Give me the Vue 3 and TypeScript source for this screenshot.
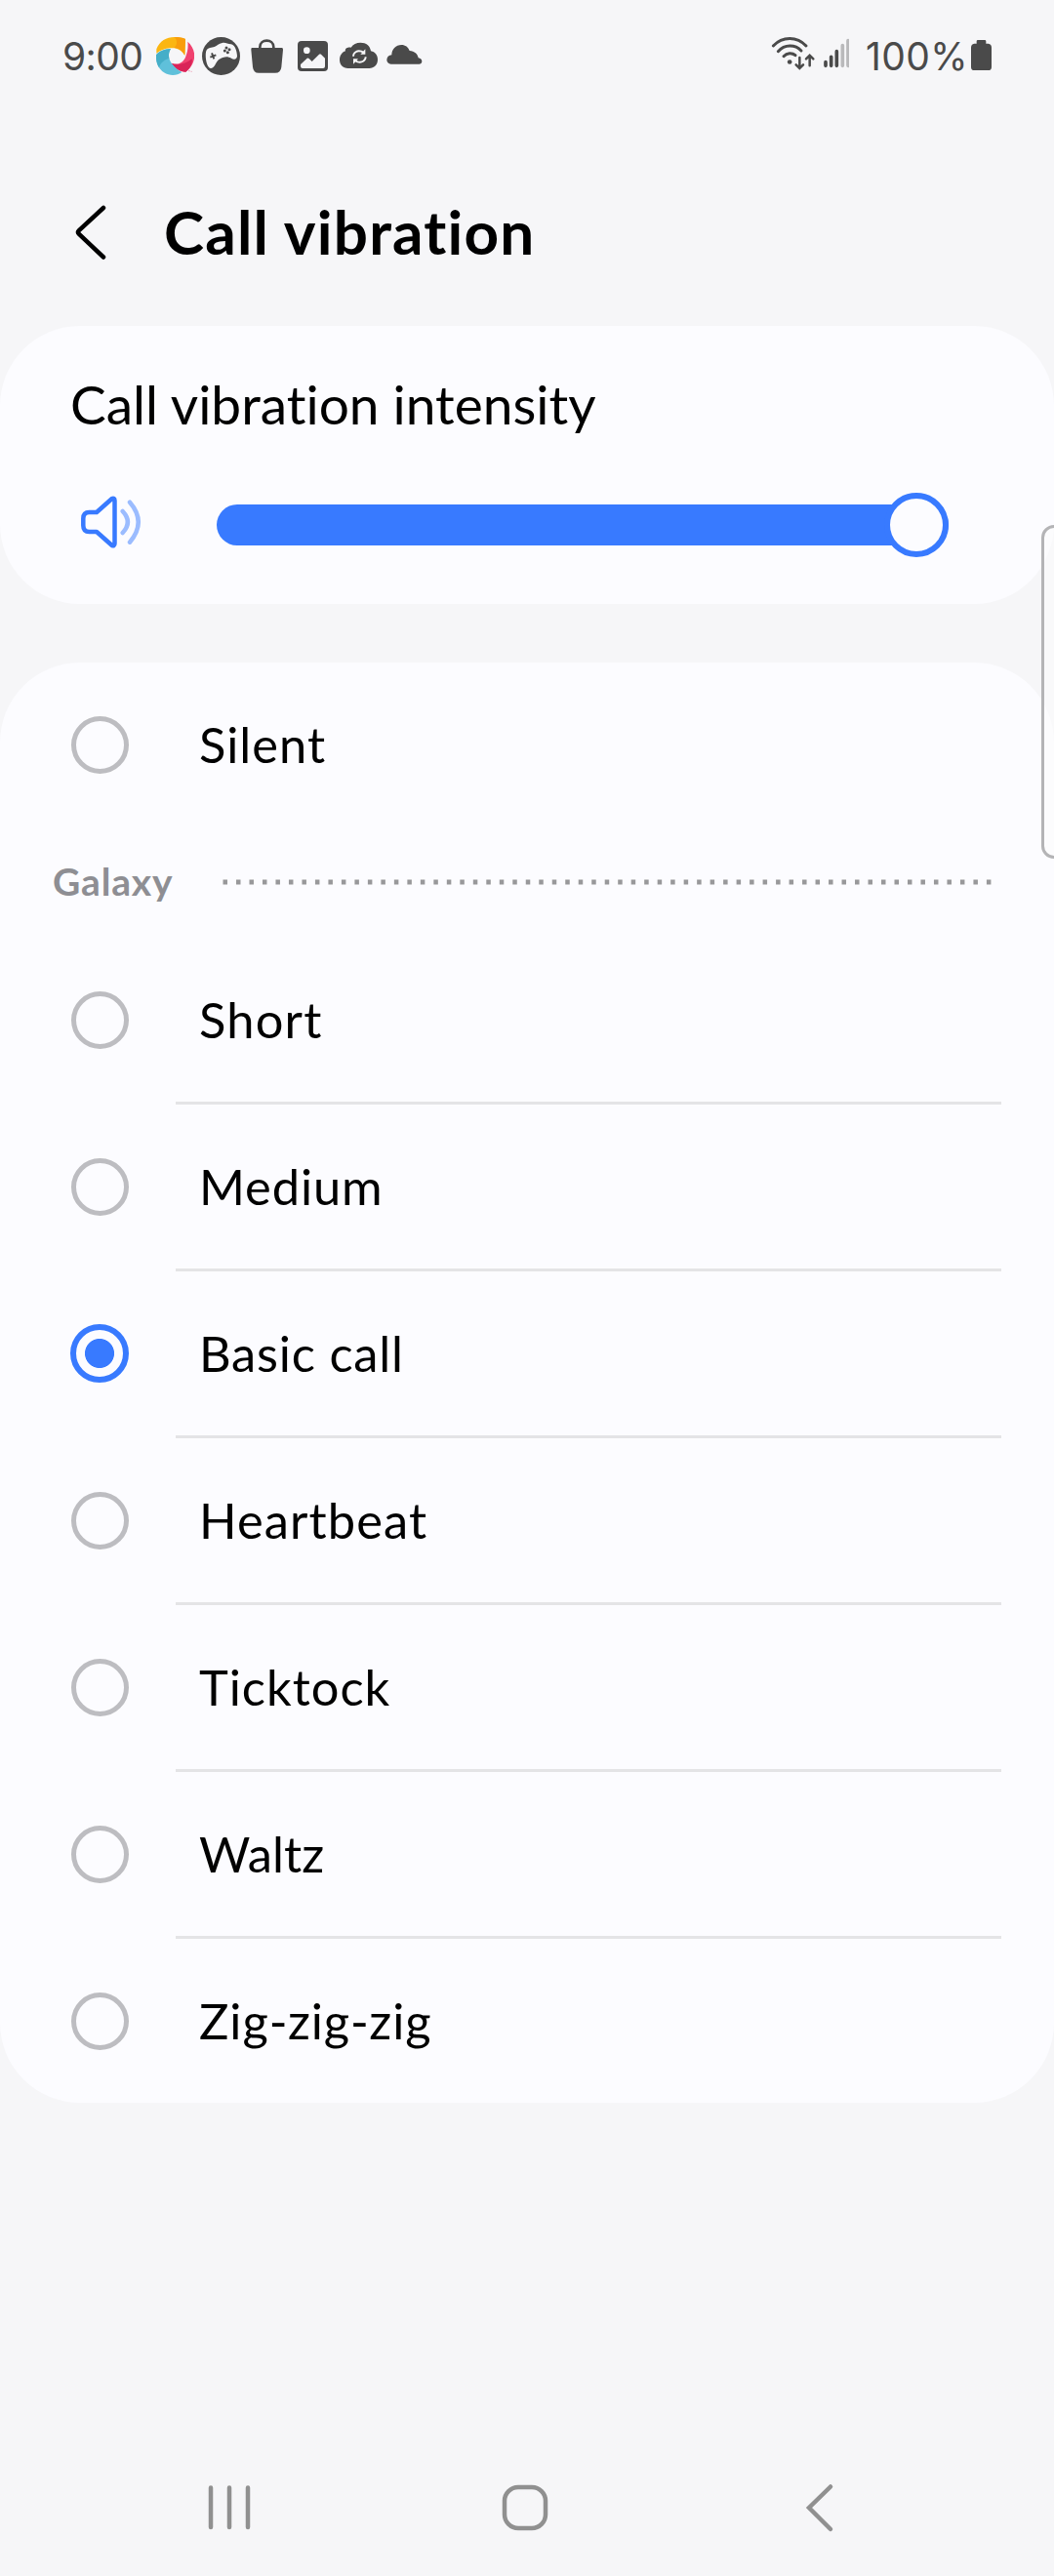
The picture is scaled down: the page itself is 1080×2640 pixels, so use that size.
<script setup lang="ts">
import { ref } from 'vue'

interface Pattern {
  name: string
  tracking: number
}

const silent: Pattern = { name: 'Silent', tracking: 1 }
const patterns: Pattern[] = [
  { name: 'Short', tracking: 1.2 },
  { name: 'Medium', tracking: 0.9 },
  { name: 'Basic call', tracking: 0.8 },
  { name: 'Heartbeat', tracking: 1.1 },
  { name: 'Ticktock', tracking: 1 },
  { name: 'Waltz', tracking: 0.1 },
  { name: 'Zig-zig-zig', tracking: 0.95 },
]
const selected = ref('Basic call')
const intensity = ref(100)
</script>

<template>
  <div class="screen">
    <header class="status">
      <span class="clock">9:00</span>
      <div class="notifications">
        <svg viewBox="330 54 117 117">
          <path fill="#fbb612" d="M331 91C340 66 362 54 386 54C400 54 411 56 420 60L418 110C407 92 392 86 373 88C356 89 342 95 331 104Z" />
          <path fill="#f99d0c" d="M386 54C400 54 411 56 420 60L418 110C407 92 395 87 384 87C396 80 396 64 386 54Z" />
          <path fill="#f0426f" d="M427 68C442 81 450 101 447 119C444 137 434 151 421 161C404 160 386 151 377 134C397 141 413 133 420 116C427 100 429 84 427 68Z" />
          <path fill="#d92458" d="M377 134C397 143 420 137 440 121C443 136 434 151 421 161C404 160 386 151 377 134Z" />
          <path fill="#5fc0da" d="M330 109C341 96 356 91 375 90C365 106 368 125 381 139C387 147 396 156 409 162C394 173 372 174 354 163C337 152 329 132 330 109Z" />
          <path fill="#45aec8" d="M330 109C341 96 356 91 375 90C368 101 368 112 370 120C358 121 343 133 339 148C332 137 329 124 330 109Z" />
          <path stroke="#e8638a" stroke-width="2" fill="none" d="M429 158h5M437 160h3" />
        </svg>
        <svg viewBox="471 54 117 117">
          <circle cx="529.500" cy="112.500" r="58.500" fill="#4a4a4a" />
          <path fill="#f6f6f8" d="M484 96C488 86 502 87 509 84C518 80 522 75 533 72C542 69 550 76 560 76C573 78 578 98 579 112C579 123 569 125 561 119C552 114 545 113 535 117C523 121 518 127 512 138C506 150 497 153 492 147C483 137 480 108 484 96Z" />
          <path stroke="#4a4a4a" stroke-width="6" d="M496 116l18-7M501 103l7 18" />
          <g fill="#4a4a4a"><circle cx="546" cy="87" r="4.500" /><circle cx="555" cy="92" r="4.500" /><circle cx="541" cy="96" r="4.500" /><circle cx="550" cy="101" r="4.500" /></g>
        </svg>
        <svg viewBox="42 54 117 117">
          <path fill="#4a4a4a" d="M55 87H146Q151 87 150 93L145 146Q143 164 126 164H75Q59 164 57 146L52 93Q51 87 55 87Z" />
          <path fill="none" stroke="#4a4a4a" stroke-width="8" d="M79 90V85C79 58 121 58 121 85V90" />
        </svg>
        <svg viewBox="183 54 117 117">
          <rect x="195" y="66" width="93" height="93" rx="12" fill="#4a4a4a" />
          <circle cx="223" cy="95" r="10" fill="#f6f6f8" />
          <path fill="#f6f6f8" d="M204 138L224 119Q227 117 230 120L239 129L261 107Q264 104 267 107L279 119V144Q279 150 273 150H210Q204 150 204 144Z" />
        </svg>
        <svg viewBox="324 54 117 117">
          <path fill="#4a4a4a" d="M350 150C334 150 324 139 324 124C324 111 331 101 342 97C339 89 349 85 359 86C365 76 376 71 388 71C406 71 418 80 420 97C433 99 441 110 441 123C441 139 430 150 415 150Z" />
          <path fill="none" stroke="#f6f6f8" stroke-width="5.500" d="M366 113C366 101 378 94 391 98L397 101M404 115C404 127 392 134 379 130L373 127" />
          <path fill="#f6f6f8" d="M403 91V107H388ZM366 137V121H381Z" />
        </svg>
        <svg viewBox="465 54 117 117">
          <path fill="#4a4a4a" d="M482 137C474 137 469 131 469 124C469 116 475 110 484 109C484 91 497 78 514 78C526 78 535 85 539 96C554 97 564 106 566 118C573 119 577 123 577 129C577 134 573 137 568 137Z" />
        </svg>
      </div>
      <div class="system">
        <svg class="wifi" viewBox="30 54 240 108">
          <g fill="none" stroke="#4a4a4a" stroke-width="9" stroke-linecap="round">
            <path d="M37 87C65 57 110 57 138 87M52 104C72 82 104 82 123 102M69 119C79 108 95 107 105 116" />
            <path stroke-width="7.500" d="M118 123V154M107 145L118 156L129 145M149 148V118M138 127L149 116L160 127" />
          </g>
          <circle cx="87.500" cy="136.500" r="7" fill="#4a4a4a" />
          <g stroke-width="11" stroke-linecap="round">
            <path stroke="#4a4a4a" d="M198 137V148M215 121V148M232 104V148" />
            <path stroke="#b9b9bb" d="M250 86V148M267 71V148" />
          </g>
        </svg>
        <span class="percent">100%</span>
        <svg class="battery" viewBox="645 60 63 99">
          <path fill="#4a4a4a" d="M666 63H687Q691 63 691 67V74H698Q708 76 708 86V146Q708 156 698 156H655Q645 156 645 146V86Q645 76 655 74H662V67Q662 63 666 63Z" />
        </svg>
      </div>
    </header>

    <div class="titlebar">
      <svg class="back" viewBox="0 0 34 60" fill="none" stroke="#000" stroke-width="4.500" stroke-linecap="round">
        <path d="M30 5L5 28Q3 30 5 32L30 55.500" />
      </svg>
      <h1>Call vibration</h1>
    </div>

    <section class="card intensity">
      <h2>Call vibration intensity</h2>
      <div class="slider-row">
        <svg class="speaker" viewBox="0 0 64 54" fill="none" stroke="#387aff" stroke-width="4.500" stroke-linecap="round" stroke-linejoin="round">
          <path d="M18 17L33.500 3.200Q36.500 2 36.500 5V49Q36.500 52 33.500 50.800L18 37H10.500Q4.300 37 4.300 30.500V23.500Q4.300 17 10.500 17Z" />
          <path stroke="#9bbcff" d="M44.700 16Q55 27 44.700 38M52 6.700Q69.500 27 52 47.700" />
        </svg>
        <div class="slider">
          <div class="fill" :style="{ width: intensity + '%' }"><i class="thumb" /></div>
        </div>
      </div>
    </section>

    <section class="card list">
      <div class="row silent">
        <span class="radio" />
        <div class="label"><span :style="{ letterSpacing: silent.tracking + 'px' }">{{ silent.name }}</span></div>
      </div>
      <div class="group">
        <span class="group-name">Galaxy</span>
        <svg class="dots" viewBox="0 0 788 6"><path d="M0.500 3H788" stroke="#98989a" stroke-width="5" stroke-dasharray="4.500 8.990" /></svg>
      </div>
      <div v-for="p in patterns" :key="p.name" class="row" @click="selected = p.name">
        <span class="radio" :class="{ on: selected === p.name }" />
        <div class="label"><span :style="{ letterSpacing: p.tracking + 'px' }">{{ p.name }}</span></div>
      </div>
    </section>

    <nav class="navbar">
      <svg viewBox="0 0 60 60"><path d="M11 9.500V50M30 9.500V50M49 9.500V50" /></svg>
      <svg viewBox="0 0 60 60"><rect x="9" y="9" width="42" height="42" rx="14" /></svg>
      <svg viewBox="0 0 60 60"><path d="M41 8.500L19 30L41 52" /></svg>
    </nav>

    <div class="edge-handle" />
  </div>
</template>

<style>
body {
  background: #f6f6f8;
}
</style>

<style scoped>
.screen {
  position: relative;
  display: flex;
  flex-direction: column;
  width: 1080px;
  height: 2640px;
  overflow: hidden;
  background: #f6f6f8;
  color: #000;
  font-family: Lato, "Noto Sans", sans-serif;
  font-variant-ligatures: none;
}

svg {
  display: block;
  flex: none;
}

.status {
  display: flex;
  align-items: center;
  height: 115px;
  padding: 0 64px;
  box-sizing: border-box;
  color: #4a4a4a;
  font-family: Inter, sans-serif;
  font-size: 39px;
  line-height: 46px;
}

.clock {
  width: 96px;
  letter-spacing: -0.6px;
}

.notifications {
  display: flex;
  gap: 8px;
}

.notifications svg {
  width: 39px;
  height: 39px;
}

.system {
  display: flex;
  align-items: center;
  margin-left: auto;
}

.wifi {
  width: 80px;
  height: 36px;
  margin-top: -7px;
}

.percent {
  width: 105px;
  padding-left: 17px;
  white-space: nowrap;
  letter-spacing: 0.4px;
  margin-right: 1px;
}

.battery {
  width: 21px;
  height: 33px;
  margin-left: 2px;
  margin-top: -2px;
}

.titlebar {
  display: flex;
  align-items: center;
  height: 219px;
  padding-left: 76px;
}

.back {
  width: 34px;
  height: 60px;
  margin-top: 27px;
}

h1 {
  margin: 25px 0 0 58px;
  font-size: 62px;
  font-weight: 700;
  line-height: 80px;
  letter-spacing: 1.2px;
}

.card {
  box-sizing: border-box;
  background: #fcfcff;
  border-radius: 82px;
}

.intensity {
  height: 285px;
  padding-top: 40px;
}

h2 {
  margin: 0 0 0 72px;
  font-size: 55px;
  font-weight: 400;
  line-height: 80px;
}

.slider-row {
  display: flex;
  align-items: center;
  height: 66px;
  margin-top: 51px;
  padding-left: 81px;
}

.speaker {
  width: 64px;
  height: 54px;
  margin-top: -6px;
}

.slider {
  width: 750px;
  height: 42px;
  margin-left: 77px;
}

.fill {
  display: flex;
  align-items: center;
  justify-content: flex-end;
  height: 42px;
  border-radius: 21px;
  background: #387aff;
}

.thumb {
  flex: none;
  width: 66px;
  height: 66px;
  box-sizing: border-box;
  border: 6px solid #387aff;
  border-radius: 50%;
  background: #fcfcff;
}

.list {
  margin-top: 60px;
  height: 1476px;
}

.row {
  display: flex;
  align-items: center;
  height: 171px;
  padding-left: 72px;
}

.row.silent,
.row:last-child {
  height: 168px;
}

.radio {
  flex: none;
  width: 59px;
  height: 59px;
  margin: 0 48.500px 0 0.500px;
  box-sizing: border-box;
  border: 5px solid #bdbdc1;
  border-radius: 50%;
  position: relative;
  top: -1.500px;
}

.row.silent .radio,
.row:last-child .radio {
  top: 0;
}

.radio.on {
  width: 60px;
  height: 60px;
  margin: 0 48px 0 0;
  border: 6px solid #387aff;
  background: radial-gradient(circle, #387aff 14.600px, #fcfcff 15.400px);
}

.label {
  width: 846px;
  height: 171px;
  padding-left: 24px;
  box-sizing: border-box;
  border-bottom: 3px solid #e4e4e6;
  font-size: 50.600px;
  line-height: 168px;
}

.row.silent .label,
.row:last-child .label {
  height: 168px;
  border-bottom: 0;
}

.group {
  display: flex;
  align-items: center;
  height: 114px;
  padding-left: 54px;
}

.group-name {
  width: 174px;
  margin-top: -3px;
  color: #8e8e93;
  font-size: 39px;
  font-weight: 700;
  line-height: 50px;
  letter-spacing: 0.8px;
}

.dots {
  width: 788px;
  height: 6px;
}

.navbar {
  display: flex;
  justify-content: space-between;
  margin-top: 385px;
  padding: 0 210px 0 205px;
}

.navbar svg {
  width: 60px;
  height: 60px;
  fill: none;
  stroke: #909090;
  stroke-width: 4.500;
  stroke-linecap: round;
}

.edge-handle {
  position: absolute;
  top: 538px;
  right: -13px;
  width: 26px;
  height: 342px;
  box-sizing: border-box;
  border: 3px solid #b4b4b6;
  border-radius: 13px;
  background: rgba(252, 252, 252, 0.5);
}
</style>
